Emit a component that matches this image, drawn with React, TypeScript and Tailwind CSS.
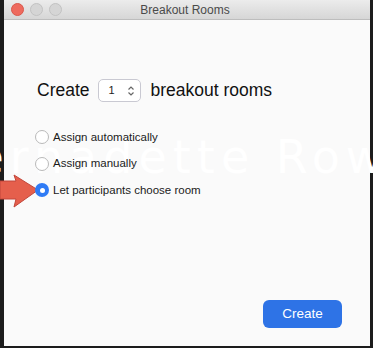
import React from "react";

function Radio({ checked, label }: { checked?: boolean; label: string }) {
  return (
    <div className="flex items-center h-[26.5px]">
      {checked ? (
        <div className="w-[14px] h-[14px] rounded-full bg-[#2f7bf5] flex items-center justify-center">
          <div className="w-[5px] h-[5px] rounded-full bg-white" />
        </div>
      ) : (
        <div className="w-[14px] h-[14px] rounded-full border border-[#b9b9b9] bg-white" />
      )}
      <span className="ml-[4px] text-[11.5px] text-[#1a1a1a]">{label}</span>
    </div>
  );
}

export default function App() {
  return (
    <div
      className="relative w-[373px] h-[348px] bg-[#1c1c1c] pl-[4px] pr-[3px] pb-[2px] overflow-hidden"
      style={{ fontFamily: '"Liberation Sans", Arial, sans-serif' }}
    >
      <div className="relative w-full h-full bg-[#fafafa] flex flex-col">
        {/* title bar */}
        <div className="relative z-10 h-[20px] shrink-0 bg-gradient-to-b from-[#ececec] to-[#d6d6d6] border-b border-[#bdbdbd] flex items-center">
          <div className="flex items-center gap-[6px] pl-[7px]">
            <div className="w-[13px] h-[13px] rounded-full bg-[#ee6a5e] border border-[#d9574b]" />
            <div className="w-[13px] h-[13px] rounded-full bg-[#d5d5d5] border border-[#c2c2c2]" />
            <div className="w-[13px] h-[13px] rounded-full bg-[#d5d5d5] border border-[#c2c2c2]" />
          </div>
          <div className="absolute inset-0 flex items-center justify-center text-[12px] text-[#4a4a4a] pr-[4px]">
            Breakout Rooms
          </div>
        </div>

        {/* watermark (behind content) */}
        <div
          className="absolute z-0 left-[-66px] top-[123px] text-[46px] text-white tracking-[6px] whitespace-nowrap pointer-events-none select-none"
          style={{ fontFamily: '"DejaVu Sans", sans-serif' }}
        >
          Bernadette Rowe
        </div>

        {/* content */}
        <div className="relative z-10 flex-1 flex flex-col pl-[33px] pr-[28px] pt-[59px] pb-[18px]">
          <div className="flex items-center h-[23px] text-[17.5px] text-[#111]">
            <span>Create</span>
            <div className="ml-[8px] mr-[10px] w-[43px] h-[23px] rounded-[5px] border border-[#c9c9d2] bg-white flex items-center pl-[10px] pr-[5px] justify-between">
              <span className="text-[11px] text-[#222]">1</span>
              <svg width="8" height="12" viewBox="0 0 8 12" fill="none" stroke="#666" strokeWidth="1.2">
                <path d="M1.5 4.5 L4 2 L6.5 4.5" />
                <path d="M1.5 7.5 L4 10 L6.5 7.5" />
              </svg>
            </div>
            <span>breakout rooms</span>
          </div>

          <div className="mt-[22px] flex flex-col ml-[-2px]">
            <Radio label="Assign automatically" />
            <Radio label="Assign manually" />
            <Radio checked label="Let participants choose room" />
          </div>

          <div className="flex-1" />

          <div className="flex justify-end">
            <button className="w-[79px] h-[28px] rounded-[6px] bg-[#2e73e6] text-white text-[13.5px]">
              Create
            </button>
          </div>
        </div>
      </div>

      {/* red arrow */}
      <svg
        className="absolute left-0 top-[174px] pointer-events-none"
        width="42"
        height="36"
        viewBox="0 0 42 36"
      >
        <polygon
          points="0,7 16,7 14,1 38,16 14,33 16,25 0,25"
          fill="#e55f4c"
          stroke="#c2463a"
          strokeWidth="1"
          strokeLinejoin="round"
        />
      </svg>
    </div>
  );
}
